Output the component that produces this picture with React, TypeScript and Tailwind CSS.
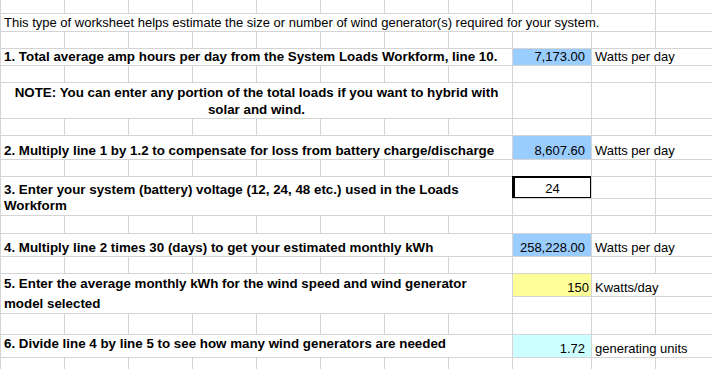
import React from "react";

const line = "border-l border-t border-[#d4d4d4]";

function Blank({ n = 11, top = true }: { n?: number; top?: boolean }) {
  return (
    <>
      {Array.from({ length: n }).map((_, i) => (
        <div key={i} className={top ? line : "border-l border-[#d4d4d4]"} />
      ))}
    </>
  );
}

function Step({ children }: { children: React.ReactNode }) {
  return (
    <div className={`${line} col-span-8 flex items-end pl-[3px] font-bold text-[13.35px] leading-4 whitespace-nowrap`}>
      {children}
    </div>
  );
}

function Value({ value, bg, pad = "pr-[6px]" }: { value: string; bg: string; pad?: string }) {
  return (
    <div className={`${line} ${bg} ${pad} flex items-end justify-end leading-4`}>
      {value}
    </div>
  );
}

function Unit({ children }: { children: React.ReactNode }) {
  return (
    <div className={`${line} col-span-2 flex items-end pl-[3px] leading-4 whitespace-nowrap`}>
      {children}
    </div>
  );
}

export default function App() {
  return (
    <div className="w-[712px] h-[369px] overflow-hidden bg-white text-black text-[13px] font-['Liberation_Sans',Arial,sans-serif]">
      <div className="grid grid-cols-[64px_64px_64px_64px_64px_64px_64px_64px_79px_64px_64px] grid-rows-[13px_18px_17px_17px_17px_36px_17px_24px_17px_22px_17px_18px_23px_17px_23px_17px_21px_23px_12px]">
        {/* row 0 */}
        <Blank top={false} />

        {/* intro */}
        <div className={`${line} col-span-10 flex items-end pl-[3px] leading-4 whitespace-nowrap`}>
          This type of worksheet helps estimate the size or number of wind generator(s) required for your system.
        </div>
        <div className={line} />
        <Blank />

        {/* line 1 */}
        <Step>1. Total average amp hours per day from the System Loads Workform, line 10.</Step>
        <Value value="7,173.00" bg="bg-[#99ccff]" />
        <Unit>Watts per day</Unit>
        <Blank />

        {/* note */}
        <div className={`${line} col-span-8 flex items-end justify-center text-center font-bold text-[13.35px] leading-[17px]`}>
          NOTE: You can enter any portion of the total loads if you want to hybrid with
          <br />
          solar and wind.
        </div>
        <Blank n={3} />
        <Blank />

        {/* line 2 */}
        <Step>2. Multiply line 1 by 1.2 to compensate for loss from battery charge/discharge</Step>
        <Value value="8,607.60" bg="bg-[#99ccff]" />
        <Unit>Watts per day</Unit>
        <Blank />

        {/* line 3 */}
        <div className={`${line} col-span-8 row-span-2 flex items-end pl-[3px] pb-px font-bold text-[13.35px] leading-4`}>
          3. Enter your system (battery) voltage (12, 24, 48 etc.) used in the Loads
          <br />
          Workform
        </div>
        <div className="border-l-[3px] border-t-2 border-r border-b border-black flex items-end justify-center leading-4">
          24
        </div>
        <div className={line} />
        <div className={line} />
        <Blank n={3} />
        <Blank />

        {/* line 4 */}
        <Step>4. Multiply line 2 times 30 (days) to get your estimated monthly kWh</Step>
        <Value value="258,228.00" bg="bg-[#99ccff]" />
        <Unit>Watts per day</Unit>
        <Blank />

        {/* line 5 */}
        <div className={`${line} col-span-8 row-span-2 pl-[3px] font-bold text-[13.35px] leading-5`}>
          5. Enter the average monthly kWh for the wind speed and wind generator
          <br />
          model selected
        </div>
        <Value value="150" bg="bg-[#ffff99]" pad="pr-[2px]" />
        <Unit>Kwatts/day</Unit>
        <Blank n={3} />
        <Blank />

        {/* line 6 */}
        <div className={`${line} col-span-8 pl-[3px] pt-px font-bold text-[13.35px] leading-4 whitespace-nowrap`}>
          6. Divide line 4 by line 5 to see how many wind generators are needed
        </div>
        <Value value="1.72" bg="bg-[#ccffff]" />
        <Unit>generating units</Unit>
        <Blank />
      </div>
    </div>
  );
}
